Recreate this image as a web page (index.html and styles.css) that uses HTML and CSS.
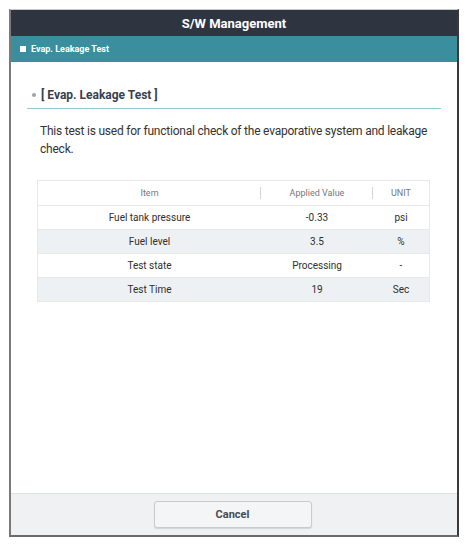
FILE: index.html
```html
<!DOCTYPE html>
<html>
<head>
<meta charset="utf-8">
<link rel="stylesheet" href="styles.css">
</head>
<body>
<div class="frame">
  <div class="titlebar">S/W Management</div>
  <div class="subbar"><span class="sq"></span>Evap. Leakage Test</div>
  <div class="content">
    <div class="section-title"><span class="dot"></span>[ Evap. Leakage Test ]</div>
    <p class="desc">This test is used for functional check of the evaporative system and leakage check.</p>
    <table class="data">
      <thead>
        <tr><th class="c1"><span>Item</span></th><th class="c2"><span>Applied Value</span></th><th class="c3"><span>UNIT</span></th></tr>
      </thead>
      <tbody>
        <tr><td>Fuel tank pressure</td><td>-0.33</td><td>psi</td></tr>
        <tr class="alt"><td>Fuel level</td><td>3.5</td><td>%</td></tr>
        <tr><td>Test state</td><td>Processing</td><td>-</td></tr>
        <tr class="alt"><td>Test Time</td><td>19</td><td>Sec</td></tr>
      </tbody>
    </table>
  </div>
  <div class="footer"><button class="btn">Cancel</button></div>
</div>
</body>
</html>
```
FILE: styles.css
```css
html, body {
  margin: 0;
  padding: 0;
  background: #ffffff;
  font-family: Roboto, "Liberation Sans", sans-serif;
}
body {
  padding: 9px 0 0 9px;
}
.frame {
  width: 446px;
  height: 525px;
  border-top: 1px solid #c9c9c9;
  border-left: 2px solid #7a7a7a;
  border-right: 2px solid #3a3a3a;
  border-bottom: 2px solid #6a6a6a;
  display: flex;
  flex-direction: column;
  background: #fff;
}
.titlebar {
  height: 26px;
  background: #2e3541;
  color: #fff;
  font-weight: bold;
  font-size: 13px;
  display: flex;
  align-items: center;
  justify-content: center;
}
.subbar {
  height: 26px;
  background: #3a8e9e;
  color: #fff;
  font-weight: bold;
  font-size: 9px;
  display: flex;
  align-items: center;
  padding-left: 9px;
}
.sq {
  width: 6px;
  height: 6px;
  background: #fff;
  margin-right: 5px;
}
.content {
  flex: 1;
  padding: 26px 16px 0 16px;
}
.section-title {
  display: flex;
  align-items: center;
  font-size: 12px;
  font-weight: bold;
  color: #38404d;
  padding: 0 0 6px 5px;
  border-bottom: 1px solid #8ecbd4;
}
.dot {
  width: 4px;
  height: 4px;
  border-radius: 50%;
  background: #a0a4a8;
  margin-right: 5px;
}
.desc {
  margin: 13px 0 0 13px;
  font-size: 12px;
  letter-spacing: -0.22px;
  line-height: 18px;
  color: #333;
}
.data {
  margin: 22px 0 0 10px;
  width: 393px;
  border-collapse: collapse;
  border: 1px solid #e6e8ea;
  font-size: 10px;
  color: #2e2e2e;
}
.data th {
  height: 24px;
  font-weight: normal;
  font-size: 9px;
  color: #777;
  text-align: center;
  border-bottom: 1px solid #e6e8ea;
  padding: 0;
  position: relative;
}
.data th.c1 { width: 223px; }
.data th.c2 { width: 112px; }
.data th.c1::after, .data th.c2::after {
  content: "";
  position: absolute;
  right: 0;
  top: 6px;
  height: 12px;
  border-right: 1px solid #d4d6d8;
}
.data td {
  height: 23px;
  text-align: center;
  border-bottom: 1px solid #e6e8ea;
  padding: 0;
}
.data tr.alt td {
  background: #eef1f3;
}
.footer {
  height: 41px;
  background: #f0f1f3;
  border-top: 1px solid #e0e2e4;
  display: flex;
  align-items: center;
  justify-content: center;
}
.btn {
  width: 158px;
  height: 27px;
  background: #f4f5f6;
  border: 1px solid #c8cacc;
  border-radius: 3px;
  box-shadow: 0 1px 1px rgba(0,0,0,0.12);
  font-family: Roboto, "Liberation Sans", sans-serif;
  font-weight: bold;
  font-size: 11px;
  color: #454b55;
  margin-left: -3px;
}
```
